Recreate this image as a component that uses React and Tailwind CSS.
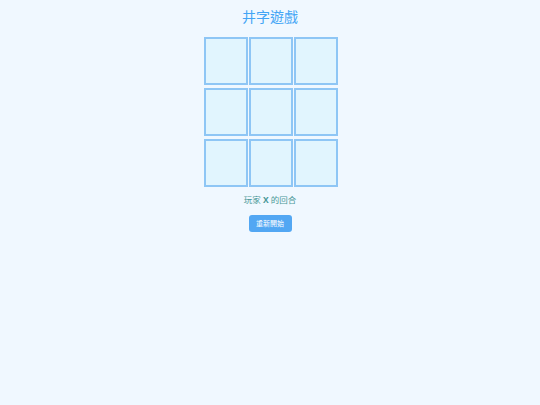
export default function App() {
  const cells = Array(9).fill(null);
  return (
    <div className="min-h-screen w-full bg-[#f0f8ff] flex flex-col items-center font-['Noto_Sans','Noto_Sans_CJK_TC',sans-serif]">
      <h1 className="mt-[7px] text-[14px] leading-[20px] text-[#42a5f5]">井字遊戲</h1>
      <div className="mt-[10px] ml-[1px] grid grid-cols-[44px_44px_44px] gap-x-[1px] gap-y-[3px]">
        {cells.map((c, i) => (
          <button key={i} className="w-[44px] h-[48px] bg-[#e1f5fe] border-2 border-[#8ec6f5]" />
        ))}
      </div>
      <p className="mt-[6px] text-[8.5px] leading-[14px] text-[#4b9898]">
        玩家 <span className="font-bold">X</span> 的回合
      </p>
      <button className="mt-[8px] w-[43px] h-[17px] rounded-[3px] bg-[#52a7f3] text-white text-[7px] leading-none">
        重新開始
      </button>
    </div>
  );
}
